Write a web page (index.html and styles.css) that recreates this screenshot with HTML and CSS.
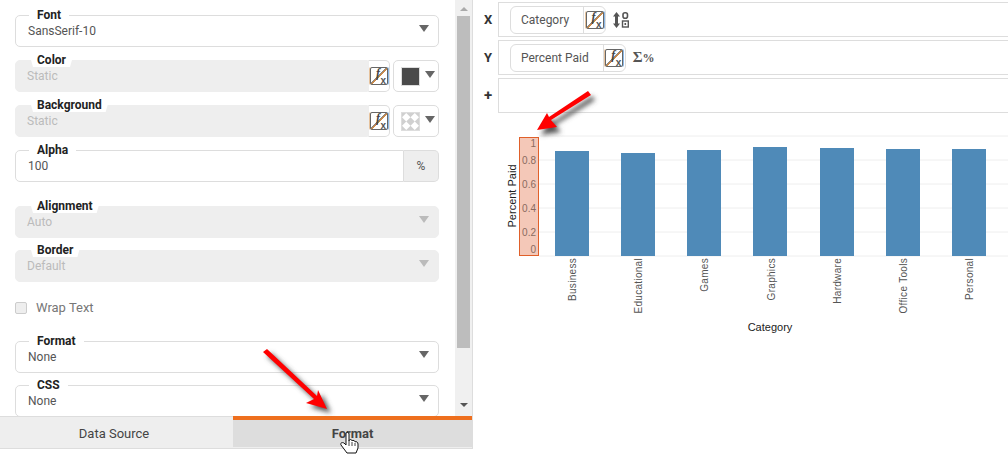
FILE: index.html
```html
<!DOCTYPE html>
<html lang="en">
<head>
    <meta charset="UTF-8">
    <title>Chart Format</title>
    <link rel="stylesheet" href="styles.css">
</head>
<body>
    <div class="left">
        <div class="form-scroll">
            <div class="form">
                <div class="field">
                    <span class="legend">Font</span>
                    <div class="box"><span class="value">SansSerif-10</span><i class="caret"></i></div>
                </div>
                <div class="field combo">
                    <span class="legend notch">Color</span>
                    <div class="box off"><span class="value">Static</span></div>
                    <span class="fx-btn"><span class="fx"><i>f</i><b>x</b></span></span>
                    <span class="swatch-btn"><i class="swatch dark"></i><i class="caret"></i></span>
                </div>
                <div class="field combo">
                    <span class="legend notch">Background</span>
                    <div class="box off"><span class="value">Static</span></div>
                    <span class="fx-btn"><span class="fx"><i>f</i><b>x</b></span></span>
                    <span class="swatch-btn">
                        <svg class="swatch" width="20" height="20" viewBox="0 0 20 20">
                            <rect width="20" height="20" fill="#d0d0d0"/>
                            <path d="M5 0l5 5-5 5-5-5zM15 0l5 5-5 5-5-5zM5 10l5 5-5 5-5-5zM15 10l5 5-5 5-5-5z" fill="#fff"/>
                        </svg>
                        <i class="caret"></i>
                    </span>
                </div>
                <div class="field combo">
                    <span class="legend">Alpha</span>
                    <div class="box"><span class="value">100</span></div>
                    <span class="addon">%</span>
                </div>
                <div class="field gap-top">
                    <span class="legend notch">Alignment</span>
                    <div class="box off"><span class="value">Auto</span><i class="caret light"></i></div>
                </div>
                <div class="field tight">
                    <span class="legend notch">Border</span>
                    <div class="box off"><span class="value">Default</span><i class="caret light"></i></div>
                </div>
                <label class="check"><i class="checkbox"></i>Wrap Text</label>
                <div class="field flush">
                    <span class="legend">Format</span>
                    <div class="box"><span class="value">None</span><i class="caret"></i></div>
                </div>
                <div class="field tight">
                    <span class="legend">CSS</span>
                    <div class="box"><span class="value">None</span><i class="caret"></i></div>
                </div>
            </div>
            <div class="scrollbar">
                <i class="arrow-up"></i>
                <div class="thumb"></div>
                <i class="arrow-down"></i>
            </div>
        </div>
        <div class="tabs">
            <div class="tab">Data Source</div>
            <div class="tab active">Format</div>
        </div>
    </div>

    <div class="right">
        <div class="shelf">
            <b class="shelf-name">X</b>
            <div class="shelf-box">
                <span class="pill"><span class="pill-text">Category</span><span class="pill-fx"><span class="fx"><i>f</i><b>x</b></span></span></span>
                <svg class="shelf-icon" width="16" height="16" viewBox="0 0 16 16">
                    <path d="M3.5 0 7 4.5H5v7h2L3.500 16 0 11.500h2v-7H0z" fill="#555"/>
                    <rect x="10" y=".8" width="4.500" height="5.500" rx="2" fill="none" stroke="#555" stroke-width="1.600"/>
                    <rect x="9.500" y="9" width="5.800" height="6" fill="none" stroke="#555" stroke-width="1.400"/>
                    <rect x="11.500" y="11" width="1.600" height="2" fill="#555"/>
                </svg>
            </div>
        </div>
        <div class="shelf">
            <b class="shelf-name">Y</b>
            <div class="shelf-box">
                <span class="pill"><span class="pill-text">Percent Paid</span><span class="pill-fx"><span class="fx"><i>f</i><b>x</b></span></span></span>
                <span class="sigma">Σ<small>%</small></span>
            </div>
        </div>
        <div class="shelf">
            <b class="shelf-name plus">+</b>
            <div class="shelf-box"></div>
        </div>

        <svg class="chart" width="535" height="225" viewBox="473 116 535 225">
            <g class="grid">
                <line x1="539" y1="136" x2="1008" y2="136"/>
                <line x1="539" y1="160" x2="1008" y2="160"/>
                <line x1="539" y1="184" x2="1008" y2="184"/>
                <line x1="539" y1="208" x2="1008" y2="208"/>
                <line x1="539" y1="232" x2="1008" y2="232"/>
                <line x1="539" y1="256" x2="1008" y2="256"/>
            </g>
            <g class="bars">
                <rect x="555" y="151" width="34" height="105"/>
                <rect x="621" y="153" width="34" height="103"/>
                <rect x="687" y="150" width="34" height="106"/>
                <rect x="753" y="147" width="34" height="109"/>
                <rect x="820" y="148" width="34" height="108"/>
                <rect x="886" y="149" width="34" height="107"/>
                <rect x="952" y="149" width="34" height="107"/>
            </g>
            <rect class="axis-box" x="519.5" y="137.5" width="19" height="118"/>
            <g class="y-labels">
                <text x="536" y="147">1</text>
                <text x="536" y="164">0.8</text>
                <text x="536" y="188">0.6</text>
                <text x="536" y="212">0.4</text>
                <text x="536" y="236">0.2</text>
                <text x="536" y="253">0</text>
            </g>
            <g class="x-labels">
                <text transform="translate(576 258) rotate(-90)">Business</text>
                <text transform="translate(642 258) rotate(-90)">Educational</text>
                <text transform="translate(708 258) rotate(-90)">Games</text>
                <text transform="translate(775 258) rotate(-90)">Graphics</text>
                <text transform="translate(841 258) rotate(-90)">Hardware</text>
                <text transform="translate(907 258) rotate(-90)">Office Tools</text>
                <text transform="translate(973 258) rotate(-90)">Personal</text>
            </g>
            <text class="axis-title" transform="translate(516 196) rotate(-90)">Percent Paid</text>
            <text class="axis-title" x="770" y="331">Category</text>
        </svg>
    </div>

    <!-- callout arrows and the mouse pointer sit over the whole screenshot -->
    <svg class="overlay" width="1008" height="455" viewBox="0 0 1008 455">
        <defs>
            <filter id="soft" x="-30%" y="-30%" width="160%" height="160%"><feGaussianBlur stdDeviation="2.5"/></filter>
            <path id="arrow1" d="M588 91 591 95 551 120 557 127 537 130 547 113 549 117z"/>
            <path id="arrow2" d="M267 349 263 352 314 399 306 403 327 409 318 390 317 396z"/>
        </defs>
        <use href="#arrow1" transform="translate(4 5)" fill="#555" filter="url(#soft)"/>
        <use href="#arrow2" transform="translate(4 4)" fill="#555" filter="url(#soft)"/>
        <use href="#arrow1" fill="#f00"/>
        <use href="#arrow2" fill="#f00"/>
        <path d="M346 433c1-1 3-1 3 1v7c0-2 3-2 3 0 0-1 3-1 3 1 1-1 3 0 3 2v4l-2 5h-9l-6-8c-1-2 1-3 3-2l2 2z" fill="#fff" stroke="#111" stroke-width="1"/>
        <path d="M349 441v5M352 442v4M355 443v3" stroke="#111" stroke-width=".8" fill="none"/>
    </svg>
</body>
</html>
```

FILE: styles.css
```css
* {
    box-sizing: border-box;
}
html, body {
    margin: 0;
    height: 455px;
    overflow: hidden;
}
body {
    display: flex;
    position: relative;
    width: 1008px;
    font-family: Roboto, Arial, sans-serif;
    font-size: 12px;
    color: #555;
    background: #fff;
}

/* the f/x toggle used next to fields and pills */
.fx {
    width: 18px;
    height: 18px;
    display: grid;
    grid-template-rows: 9px 7px;
    border: 1px solid #666;
    border-radius: 2px;
    box-shadow: 1px 0 0 #8ab8e8, -1px 0 0 #e6c29c;
    background: linear-gradient(to bottom right, transparent 46%, #888 46%, #888 50%, #c98a4b 50%, #c98a4b 54%, transparent 54%);
}
.fx i {
    justify-self: start;
    margin-left: 5px;
    font: italic 700 12px/10px "Liberation Serif", serif;
    color: #444;
}
.fx b {
    justify-self: end;
    margin-right: 1px;
    font: 700 10px/7px "Liberation Sans", sans-serif;
    color: #555;
}

/* left panel */
.left {
    width: 473px;
    height: 449px;
    display: flex;
    flex-direction: column;
    border-right: 1px solid #ddd;
    border-bottom: 1px solid #ddd;
}
.form-scroll {
    height: 416px;
    display: flex;
    overflow: hidden;
}
.form {
    width: 455px;
    padding: 15px 16px 0 15px;
    flex: none;
}
.field {
    position: relative;
    display: flex;
    height: 32px;
    margin-bottom: 13px;
}
.field.gap-top {
    margin-top: 24px;
    margin-bottom: 12px;
}
.field.tight {
    margin-bottom: 0;
    margin-top: 12px;
}
.field.flush {
    margin-bottom: 0;
}
.legend {
    position: absolute;
    left: 14px;
    top: -7px;
    padding: 0 8px;
    height: 14px;
    line-height: 14px;
    font-weight: 700;
    font-size: 12px;
    color: #222;
    background: #fff;
    z-index: 1;
}
.legend.notch {
    clip-path: polygon(0 0, 100% 0, calc(100% - 4px) 100%, 4px 100%);
}
.box {
    flex: 1;
    display: flex;
    align-items: center;
    justify-content: space-between;
    padding: 0 8px 1px 12px;
    border: 1px solid #ddd;
    border-radius: 5px;
    background: #fff;
}
.box.off {
    background: #eee;
    border-color: #eee;
    color: #bbb;
    padding: 0 8px 0 11px;
}
.combo .box {
    border-top-right-radius: 0;
    border-bottom-right-radius: 0;
}
.caret {
    width: 0;
    height: 0;
    margin-top: -5px;
    margin-right: 1px;
    border-left: 5px solid transparent;
    border-right: 5px solid transparent;
    border-top: 7px solid #666;
}
.caret.light {
    border-top-color: #bbb;
}
.fx-btn {
    width: 22px;
    display: flex;
    align-items: center;
    justify-content: center;
    border: 1px solid #ddd;
    border-left-color: #eee;
    border-radius: 0 5px 5px 0;
}
.swatch-btn {
    width: 46px;
    margin-left: 3px;
    display: flex;
    align-items: flex-start;
    gap: 5px;
    padding: 6px 0 0 7px;
    border: 1px solid #ddd;
    border-radius: 5px;
}
.swatch-btn .caret {
    margin-top: 4px;
}
.swatch {
    display: block;
    width: 19px;
    height: 19px;
    border: 1px solid #ddd;
}
.swatch.dark {
    background: #4a4a4a;
}
.addon {
    width: 35px;
    display: flex;
    align-items: center;
    justify-content: center;
    background: #eee;
    border: 1px solid #ddd;
    border-left: 0;
    border-radius: 0 5px 5px 0;
    font-size: 12px;
}
.check {
    display: flex;
    align-items: center;
    height: 59px;
    padding-bottom: 8px;
    color: #777;
    font-size: 13px;
}
.checkbox {
    width: 12px;
    height: 12px;
    margin-right: 9px;
    border: 1px solid #ccc;
    border-radius: 2px;
    background: #eee;
}
.scrollbar {
    width: 17px;
    height: 416px;
    display: flex;
    flex-direction: column;
    align-items: flex-start;
    background: #f0f0f0;
    padding-left: 2px;
}
.thumb {
    width: 13px;
    height: 332px;
    margin-top: 5px;
    background: #bdbdbd;
}
.arrow-up, .arrow-down {
    width: 0;
    height: 0;
    margin-left: 3px;
    border-left: 4px solid transparent;
    border-right: 4px solid transparent;
}
.arrow-up {
    margin-top: 7px;
    border-bottom: 4px solid #aaa;
}
.arrow-down {
    margin-top: 55px;
    border-top: 4px solid #555;
}
.tabs {
    display: flex;
    height: 32px;
    background: #eee;
}
.tab {
    display: flex;
    align-items: center;
    justify-content: center;
    width: 233px;
    height: 31px;
    padding: 2px 5px 0 0;
    font-size: 13px;
    color: #444;
    background: #eee;
    border-top: 1px solid #ddd;
}
.tab.active {
    flex: 1;
    font-weight: 700;
    background: #ddd;
    border-top: 4px solid #ee6f1e;
    padding: 0;
}

/* right panel */
.right {
    flex: 1;
    padding-top: 2px;
}
.shelf {
    display: flex;
    height: 35px;
    margin-bottom: 3px;
}
.shelf-name {
    width: 25px;
    padding: 10px 0 0 11px;
    font-size: 13px;
    color: #333;
}
.shelf-name.plus {
    font-size: 15px;
    padding-top: 8px;
}
.shelf-box {
    flex: 1;
    display: flex;
    align-items: center;
    gap: 7px;
    padding-left: 11px;
    border: 1px solid #ddd;
    border-right: 0;
}
.pill {
    display: flex;
    height: 28px;
    border: 1px solid #ddd;
    border-radius: 6px;
}
.pill-text {
    display: flex;
    align-items: center;
    padding: 0 14px 0 10px;
    color: #555;
    border-right: 1px solid #ddd;
}
.pill-fx {
    width: 21px;
    display: flex;
    align-items: center;
    justify-content: center;
}
.sigma {
    font: 700 15px "Liberation Serif", serif;
    color: #555;
}
.sigma small {
    font-size: 12px;
}
.chart {
    display: block;
    margin-top: 3px;
}
.grid line {
    stroke: #eee;
    stroke-width: 1;
}
.bars rect {
    fill: #4f8ab8;
}
.axis-box {
    fill: #f4c8b8;
    stroke: #e0602a;
}
.y-labels text {
    font: 10px "Liberation Sans", sans-serif;
    fill: #8a6b60;
    text-anchor: end;
}
.x-labels text {
    font: 10px "Liberation Sans", sans-serif;
    letter-spacing: .3px;
    fill: #555;
    text-anchor: end;
}
.axis-title {
    font: 11px "Liberation Sans", sans-serif;
    fill: #222;
    text-anchor: middle;
}

.overlay {
    position: absolute;
    left: 0;
    top: 0;
    pointer-events: none;
}
```
